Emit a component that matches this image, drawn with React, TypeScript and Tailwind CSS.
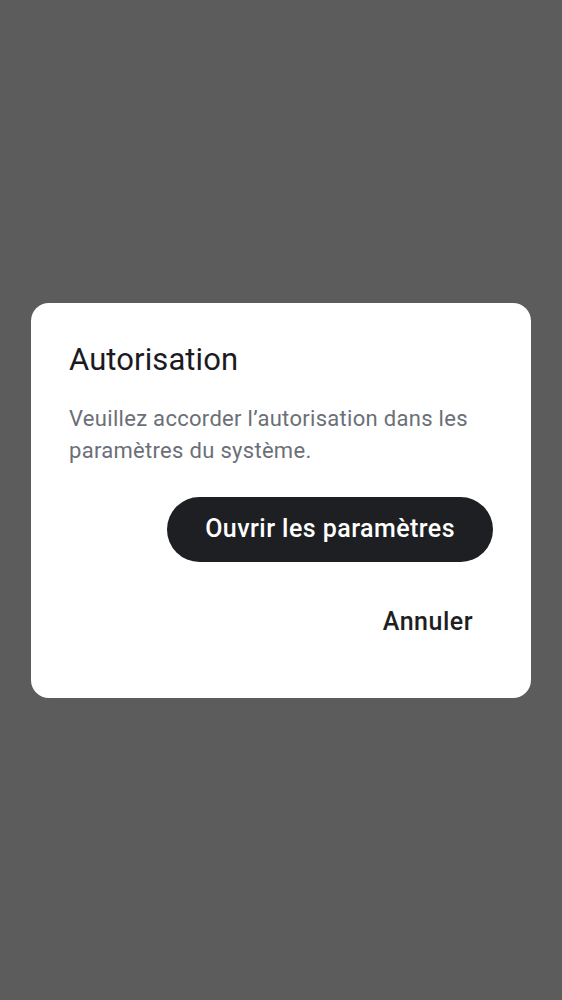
import React from 'react';

export default function App() {
  return (
    <div
      className="flex min-h-[1000px] w-full items-center justify-center bg-[#5c5c5c] px-[31px]"
      style={{ fontFamily: 'Roboto, "Noto Sans", sans-serif' }}
    >
      <div className="w-full rounded-[18px] bg-white px-[38px] pt-[37px] pb-[43px]">
        <h2 className="text-[31px] leading-[40px] font-normal tracking-[0.1px] text-[#1b1b1f]">Autorisation</h2>
        <p className="mt-[23px] text-[22px] leading-[32px] tracking-[0.3px] text-[#6b6f78]">
          Veuillez accorder l’autorisation dans les paramètres du système.
        </p>
        <div className="mt-[30px] flex flex-col items-end gap-[28px]">
          <button
            type="button"
            className="h-[65px] rounded-full bg-[#1e1f23] px-[38px] text-[25px] font-medium tracking-[0.45px] text-white"
          >
            Ouvrir les paramètres
          </button>
          <button
            type="button"
            className="h-[65px] rounded-full px-[20px] text-[25px] font-medium tracking-[0.5px] text-[#1e1f23]"
          >
            Annuler
          </button>
        </div>
      </div>
    </div>
  );
}
